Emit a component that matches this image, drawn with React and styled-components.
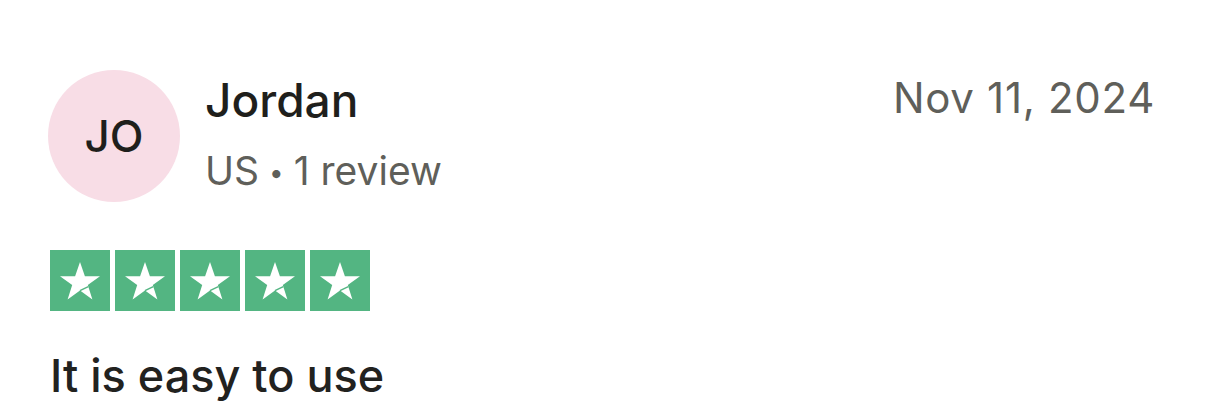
import React from "react";
import styled, { createGlobalStyle } from "styled-components";

const GlobalStyle = createGlobalStyle`
  body {
    margin: 0;
    background: #ffffff;
    font-family: Inter, "Noto Sans", sans-serif;
  }
`;

const Card = styled.article`
  padding: 70px 51px 0 48px;
`;

const Header = styled.header`
  display: flex;
  align-items: flex-start;
`;

const Avatar = styled.div`
  width: 132px;
  height: 132px;
  border-radius: 50%;
  background: #f8dde6;
  color: #1f1f1c;
  display: flex;
  align-items: center;
  justify-content: center;
  font-size: 44px;
  font-weight: 500;
  flex-shrink: 0;
`;

const Info = styled.div`
  display: flex;
  flex-direction: column;
  margin-left: 25px;
  padding-top: 5px;
`;

const Name = styled.div`
  font-size: 46px;
  line-height: 50px;
  font-weight: 500;
  color: #1f1f1c;
`;

const Meta = styled.div`
  margin-top: 23px;
  font-size: 39px;
  line-height: 46px;
  color: #5f5f5a;
`;

const Dot = styled.span`
  font-size: 26px;
  margin: 0 10px;
  vertical-align: 3px;
`;

const DateLabel = styled.time`
  margin-left: auto;
  padding-top: 5px;
  font-size: 42px;
  line-height: 46px;
  color: #5f5f5a;
  letter-spacing: 0.7px;
`;

const Stars = styled.div`
  display: flex;
  gap: 5px;
  margin: 48px 0 0 2px;
`;

const StarBox = styled.div`
  width: 60px;
  height: 61px;
  background: ${(p) => (p.$filled ? "#53b582" : "#dcdce6")};
  display: flex;
  align-items: center;
  justify-content: center;
`;

const Title = styled.h2`
  margin: 37px 0 0 2px;
  font-size: 45px;
  line-height: 56px;
  font-weight: 500;
  color: #22221f;
`;

const Star = () => (
  <svg width="42" height="40" viewBox="0 0 42 40">
    <polygon
      points="21,1 25.9,15.2 41,15.2 28.8,24.1 33.4,38.5 21,29.6 8.6,38.5 13.2,24.1 1,15.2 16.1,15.2"
      fill="#ffffff"
    />
    <line x1="21" y1="29.6" x2="29.3" y2="25.6" stroke="#53b582" strokeWidth="1.4" />
  </svg>
);

export default function App() {
  return (
    <Card>
      <GlobalStyle />
      <Header>
        <Avatar>JO</Avatar>
        <Info>
          <Name>Jordan</Name>
          <Meta>
            US<Dot>•</Dot>1 review
          </Meta>
        </Info>
        <DateLabel>Nov 11, 2024</DateLabel>
      </Header>
      <Stars>
        {[1, 2, 3, 4, 5].map((n) => (
          <StarBox key={n} $filled>
            <Star />
          </StarBox>
        ))}
      </Stars>
      <Title>It is easy to use</Title>
    </Card>
  );
}
